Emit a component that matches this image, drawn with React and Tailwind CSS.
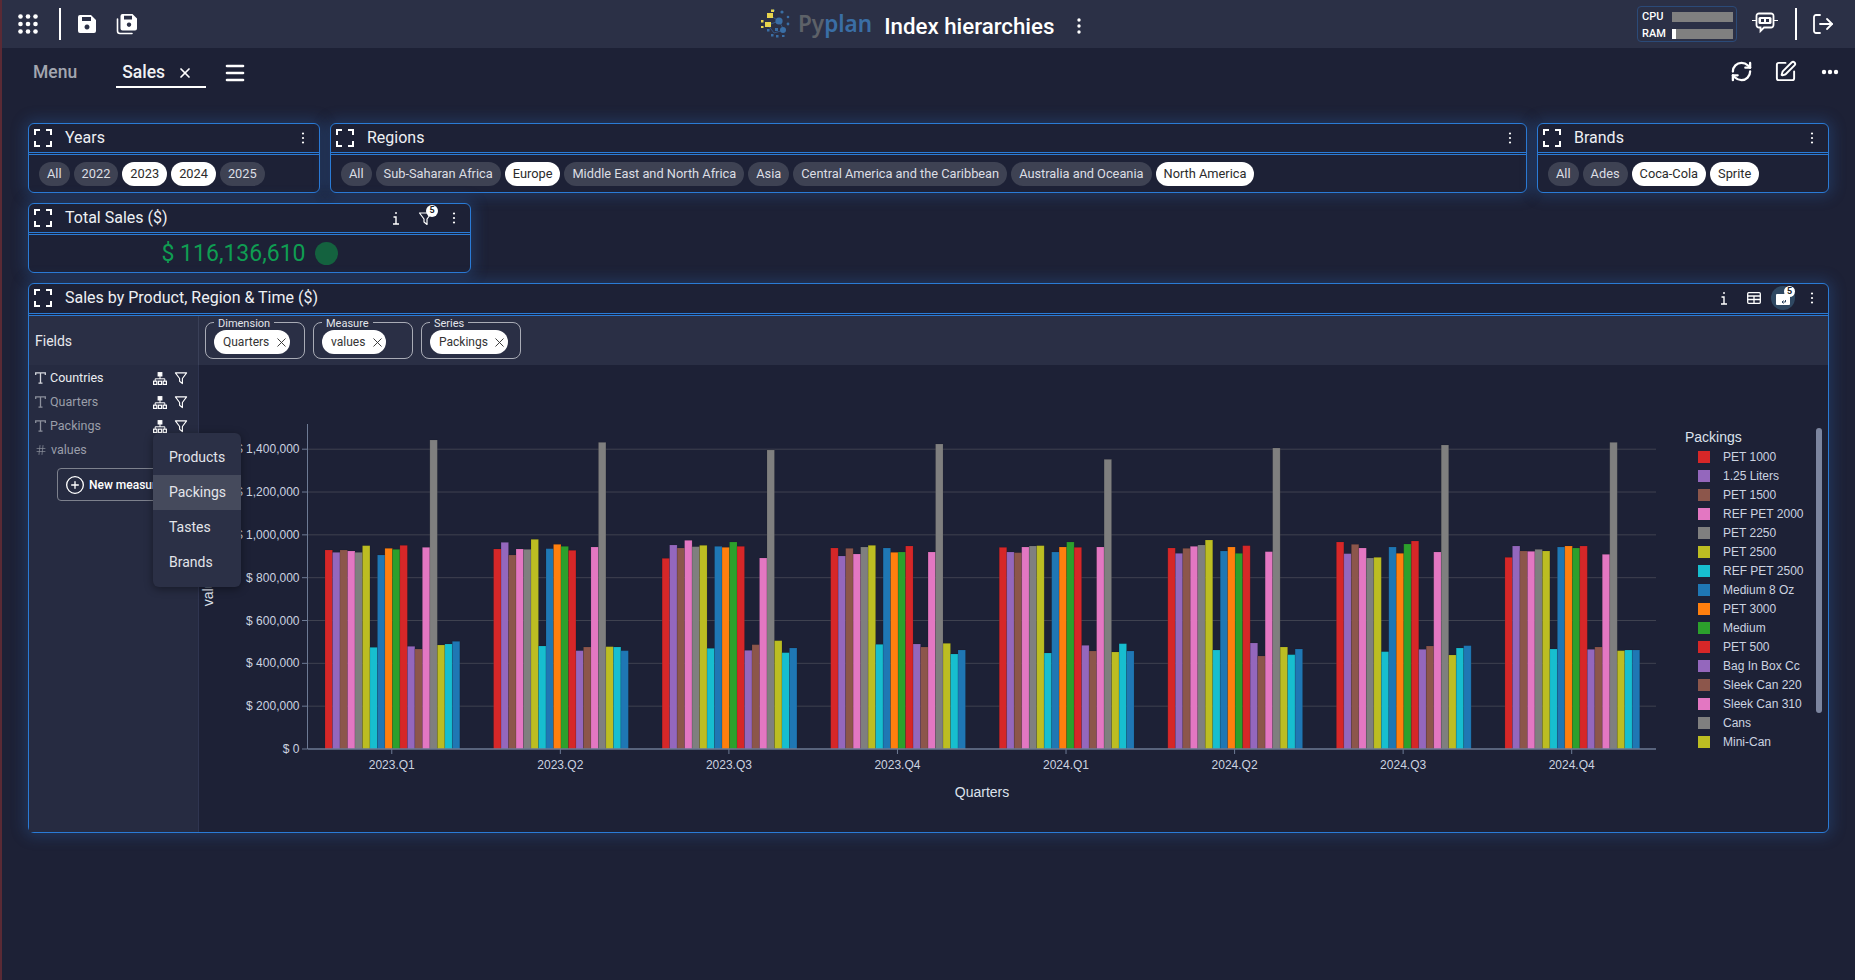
import { X, Menu, Hash, CirclePlus, RefreshCw, SquarePen, LogOut } from "lucide-react";

const palette = ["#d62728", "#9467bd", "#8c564b", "#e377c2", "#7f7f7f", "#bcbd22", "#17becf", "#1f77b4", "#ff7f0e", "#2ca02c"];
const swatches = ["bg-[#d62728]", "bg-[#9467bd]", "bg-[#8c564b]", "bg-[#e377c2]", "bg-[#7f7f7f]", "bg-[#bcbd22]", "bg-[#17becf]", "bg-[#1f77b4]", "bg-[#ff7f0e]", "bg-[#2ca02c]"];

// bar tops, measured off the reference (3x page y, minus 420)
const tops = [
  [390, 397, 390, 393, 397, 377, 682, 405, 385, 388, 376, 679, 687, 382, 60, 675, 672, 664],
  [387, 367, 405, 387, 388, 358, 678, 386, 373, 379, 391, 692, 681, 381, 67, 680, 681, 692],
  [415, 375, 384, 361, 380, 376, 685, 379, 382, 366, 379, 691, 674, 414, 90, 662, 698, 684],
  [384, 408, 385, 402, 381, 376, 673, 384, 397, 396, 378, 672, 681, 396, 72, 670, 702, 690],
  [382, 396, 398, 381, 378, 377, 699, 396, 381, 366, 382, 676, 693, 381, 118, 696, 671, 693],
  [384, 400, 385, 379, 375, 360, 690, 393, 381, 400, 377, 669, 708, 395, 84, 681, 704, 687],
  [366, 401, 373, 384, 414, 412, 695, 381, 400, 372, 363, 688, 678, 396, 75, 705, 684, 677],
  [412, 378, 393, 394, 388, 393, 687, 381, 378, 384, 378, 688, 681, 403, 67, 692, 690, 690],
];
const quarters = ["2023.Q1", "2023.Q2", "2023.Q3", "2023.Q4", "2024.Q1", "2024.Q2", "2024.Q3", "2024.Q4"];
const yTicks = ["$ 0", "$ 200,000", "$ 400,000", "$ 600,000", "$ 800,000", "$ 1,000,000", "$ 1,200,000", "$ 1,400,000"];
const legend = ["PET 1000", "1.25 Liters", "PET 1500", "REF PET 2000", "PET 2250", "PET 2500", "REF PET 2500", "Medium 8 Oz", "PET 3000", "Medium", "PET 500", "Bag In Box Cc", "Sleek Can 220", "Sleek Can 310", "Cans", "Mini-Can"];

function Corners() {
  return (
    <svg width="18" height="18" viewBox="0 0 18 18" fill="none" stroke="#fff" strokeWidth="2" className="shrink-0">
      <path d="M1 6V1h5M12 1h5v5M17 12v5h-5M6 17H1v-5" />
    </svg>
  );
}

function Kebab() {
  return (
    <svg width="4" height="14" viewBox="0 0 4 14" fill="#fff" className="shrink-0">
      <circle cx="2" cy="2.5" r="1.1" />
      <circle cx="2" cy="7" r="1.1" />
      <circle cx="2" cy="11.5" r="1.1" />
    </svg>
  );
}

function InfoI() {
  return (
    <svg width="8" height="14" viewBox="0 0 8 14" fill="none" stroke="#fff" strokeWidth="1.4">
      <path d="M4 1v2M1.5 6H4v7M1 13h6" />
    </svg>
  );
}

function Funnel({ size = 15 }) {
  return (
    <svg width={size} height={size} viewBox="0 0 15 15" fill="none" stroke="#fff" strokeWidth="1.2" strokeLinejoin="round">
      <path d="M1.5 2h12L9 8v5.500L6 11V8z" />
    </svg>
  );
}

function Tree() {
  return (
    <svg width="14" height="13" viewBox="0 0 14 13" fill="none" stroke="#fff" strokeWidth="1.200">
      <rect x="5.200" y="0.700" width="3.600" height="3.200" fill="#fff" />
      <path d="M7 4v3M2.200 9V6.800h9.600V9" strokeWidth="1" />
      <rect x="0.600" y="9.200" width="3.200" height="3.200" />
      <rect x="5.400" y="9.200" width="3.200" height="3.200" />
      <rect x="10.200" y="9.200" width="3.200" height="3.200" />
    </svg>
  );
}

function SerifT({ dim }) {
  return (
    <svg width="11" height="12" viewBox="0 0 11 12" fill="none" stroke={dim ? "#8c909c" : "#d5d7dd"} strokeWidth="1.3">
      <path d="M.7 3V.9h9.600V3M5.500 1v10M3.500 11.200h4" />
    </svg>
  );
}

function Logo() {
  return (
    <svg width="32" height="30" viewBox="0 0 32 30">
      <g stroke="#3a669c" strokeWidth="0.7">
        <path d="M11 7L19 12L24 21L14 24L8 16L19 12" fill="none" />
      </g>
      <g fill="#3a6ea5">
        <circle cx="19" cy="12" r="3.600" />
        <circle cx="23" cy="21" r="3" />
        <circle cx="22" cy="3" r="1.600" />
        <circle cx="28" cy="8" r="1.300" />
        <circle cx="28" cy="15" r="1.400" />
        <rect x="15" y="19" width="3" height="3" />
        <rect x="11" y="25" width="2.500" height="2.500" />
        <rect x="16" y="26" width="2.500" height="2.500" />
        <rect x="7" y="20" width="2.500" height="2.500" />
        <rect x="22" y="26" width="2.500" height="2" />
        <circle cx="14" cy="1.500" r="1" />
      </g>
      <g fill="#e8d44d">
        <rect x="7" y="4" width="6" height="5" />
        <rect x="5" y="13" width="6" height="5" />
        <rect x="11" y="0.500" width="3" height="2.500" />
        <rect x="1" y="11" width="2.500" height="2.500" />
        <rect x="1" y="17" width="2.500" height="2" />
      </g>
    </svg>
  );
}

function SaveIcon({ stack }) {
  return (
    <svg width="22" height="22" viewBox="0 0 22 22">
      {stack && <path d="M1.500 6v12a2.500 2.500 0 0 0 2.500 2.500h12" fill="none" stroke="#fff" strokeWidth="1.600" strokeLinecap="round" />}
      <path
        fillRule="evenodd"
        fill="#fff"
        d={
          stack
            ? "M6.500 1h10l4.500 4.500v10a2 2 0 0 1-2 2H6.500a2 2 0 0 1-2-2V3a2 2 0 0 1 2-2zM8 2.800v3.700h8V2.800zM13 9.500a2.200 2.200 0 1 0 .01 0z"
            : "M4 2h11l5 5v11a2 2 0 0 1-2 2H4a2 2 0 0 1-2-2V4a2 2 0 0 1 2-2zM6 4v4h9V4zM11 11.500a2.500 2.500 0 1 0 .01 0z"
        }
      />
    </svg>
  );
}

function BotIcon() {
  return (
    <svg width="26" height="24" viewBox="0 0 26 24" fill="none">
      <path d="M0 8.500h4M22 8.500h4" stroke="#fff" strokeWidth="1.200" />
      <path d="M7 1.500h12a2.500 2.500 0 0 1 2.500 2.500v9a2.500 2.500 0 0 1-2.500 2.500h-7l-3.500 3.500v-3.500H7A2.500 2.500 0 0 1 4.500 13V4A2.500 2.500 0 0 1 7 1.500z" stroke="#fff" strokeWidth="1.800" />
      <rect x="6.500" y="5" width="13" height="7" rx="1.500" fill="#fff" />
      <rect x="9" y="7" width="3" height="3" fill="#2b3046" />
      <rect x="14" y="7" width="3" height="3" fill="#2b3046" />
    </svg>
  );
}

function Pill({ label, on }) {
  return (
    <span className={`flex h-[24px] items-center rounded-full px-[8px] text-[12.8px] ${on ? "bg-white text-[#2b2b2b]" : "bg-[#3e4253] text-[#dcdee4]"}`}>
      {label}
    </span>
  );
}

function Card({ title, actions, className, headerClass = "h-[29px]", bodyClass, children }) {
  return (
    <div className={`flex flex-col rounded-[6px] border border-[#2a7bd6] bg-[#1d2136] shadow-[0_0_14px_4px_rgba(45,105,180,0.28)] ${className}`}>
      <div className={`flex shrink-0 items-center gap-[13px] border-b border-[#2a7bd6] pl-[5px] pr-[14px] ${headerClass}`}>
        <Corners />
        <span className="flex-1 text-[16px] leading-none text-[#eef0f4]">{title}</span>
        {actions || <Kebab />}
      </div>
      <div className={`mt-px flex-1 border-t border-[#2a7bd6] ${bodyClass}`}>{children}</div>
    </div>
  );
}

function Slicer({ title, className, items }) {
  return (
    <Card title={title} className={className} bodyClass="flex items-center gap-[4px] px-[10px]">
      {items.map(([label, on]) => (
        <Pill key={label} label={label} on={on} />
      ))}
    </Card>
  );
}

function DropBox({ label, chip, chipClass }) {
  return (
    <div className="relative flex h-[37px] w-[100px] items-center rounded-[8px] border border-[#a9acb6] pl-[8px]">
      <span className="absolute -top-[6px] left-[8px] bg-[#2a2f45] px-[4px] text-[11px] leading-[13px] text-[#e3e5ea]">{label}</span>
      <span className={`mt-[3px] flex h-[24px] items-center justify-between rounded-full bg-white pl-[9px] pr-[1px] text-[12px] text-[#333] ${chipClass}`}>
        {chip}
        <X size={15} strokeWidth={1.5} color="#333" />
      </span>
    </div>
  );
}

function FieldRow({ label, dim, active }) {
  return (
    <div className="flex h-[24px] items-center pl-[6px] pr-[10px]">
      <SerifT dim={dim} />
      <span className={`ml-[4px] flex-1 text-[12.5px] ${active ? "text-[#eceef1]" : "text-[#9a9ea9]"}`}>{label}</span>
      <Tree />
      <span className="ml-[7px] flex">
        <Funnel size={14} />
      </span>
    </div>
  );
}

function Chart() {
  const band = 168.56;
  const barW = 7.49;
  return (
    <svg width="1481" height="464" viewBox="199 365 1481 464" className="shrink-0" style={{ fontFamily: "'Liberation Sans', sans-serif" }}>
      {yTicks.map((t, k) => {
        const y = 749 - k * 42.83;
        return (
          <g key={t}>
            {k > 0 && <line x1="308" x2="1656" y1={y} y2={y} stroke="#3f4250" strokeWidth="1" />}
            <line x1="302" x2="307" y1={y} y2={y} stroke="#6d7a94" strokeWidth="1" />
            <text x="299.500" y={y + 4} textAnchor="end" fontSize="12" fill="#ccd3e0">{t}</text>
          </g>
        );
      })}
      <line x1="307.500" x2="307.500" y1="424" y2="749" stroke="#6d7a94" strokeWidth="1" />
      {tops.map((row, g) =>
        row.map((v, i) => {
          const top = 420 + v / 3;
          return (
            <rect
              key={`${g}-${i}`}
              x={325 + g * band + i * barW}
              y={top}
              width={barW}
              height={749 - top}
              fill={palette[i % 10]}
              stroke="#000"
              strokeOpacity="0.12"
              strokeWidth="0.8"
            />
          );
        })
      )}
      <line x1="307.500" x2="1656" y1="749" y2="749" stroke="#6d7a94" strokeWidth="1.500" />
      {quarters.map((q, g) => {
        const x = 307.5 + (g + 0.5) * band;
        return (
          <g key={q}>
            <line x1={x} x2={x} y1="749" y2="754" stroke="#6d7a94" strokeWidth="1" />
            <text x={x} y="769" textAnchor="middle" fontSize="12" fill="#ccd3e0">{q}</text>
          </g>
        );
      })}
      <text x="982" y="797" textAnchor="middle" fontSize="14" fill="#dce2ec">Quarters</text>
      <text transform="translate(213 586) rotate(-90)" textAnchor="middle" fontSize="14" fill="#dce2ec">values</text>
    </svg>
  );
}

export default function App() {
  return (
    <div className="h-[980px] w-full overflow-hidden border-l-2 border-[#5a2a35] bg-[#1d2136] font-['Roboto',sans-serif]">
      {/* TOP BAR */}
      <header className="relative flex h-[48px] items-center bg-[#2b3046] pl-[16px] pr-[20px]">
        <svg width="20" height="20" viewBox="0 0 20 20" fill="#fff">
          {[2.5, 10, 17.5].map((y) => [2.5, 10, 17.5].map((x) => <circle key={`${x}${y}`} cx={x} cy={y} r="2.300" />))}
        </svg>
        <div className="ml-[21px] h-[32px] w-[2px] bg-white" />
        <div className="ml-[15px] flex items-center gap-[18px]">
          <SaveIcon />
          <SaveIcon stack />
        </div>
        <div className="flex-1" />
        <div className="flex h-[36px] w-[100px] flex-col justify-center gap-[7px] rounded-[4px] border border-[#2b4a78] pl-[4px] pr-[3px] pt-[3px] text-[11px] font-medium leading-[10px] text-white">
          <div className="flex items-center justify-between">
            <span>CPU</span>
            <span className="h-[10px] w-[61px] bg-[#808080]" />
          </div>
          <div className="flex items-center justify-between">
            <span>RAM</span>
            <span className="flex h-[10px] w-[61px] bg-[#808080]">
              <span className="h-full w-[4px] bg-white" />
            </span>
          </div>
        </div>
        <div className="ml-[15px]">
          <BotIcon />
        </div>
        <div className="ml-[17px] h-[32px] w-[2px] bg-white" />
        <LogOut size={24} strokeWidth={1.8} color="#fff" className="ml-[14px]" />
        {/* centred title */}
        <div className="absolute left-[758px] top-0 flex h-[48px] items-center">
          <Logo />
          <span className="ml-[6px] font-['Noto_Sans',sans-serif] text-[22.5px] font-semibold leading-none">
            <span className="text-[#5d6168]">Py</span>
            <span className="text-[#3a6ea5]">plan</span>
          </span>
          <span className="ml-[12px] pt-[5px] text-[22.3px] font-medium text-white">Index hierarchies</span>
          <span className="ml-[22px] flex pt-[3px]">
            <svg width="6" height="16" viewBox="0 0 6 16" fill="#fff">
              <circle cx="3" cy="2" r="1.700" />
              <circle cx="3" cy="8" r="1.700" />
              <circle cx="3" cy="14" r="1.700" />
            </svg>
          </span>
        </div>
      </header>

      {/* TABS */}
      <div className="flex h-[48px] items-start pl-[31px] pr-[16px] pt-[12px]">
        <span className="text-[17.5px] font-medium leading-[24px] text-[#a3a6b0]">Menu</span>
        <div className="ml-[39px] flex h-[28px] w-[90px] items-start gap-[12px] border-b-2 border-white pl-[6px]">
          <span className="text-[17.5px] font-medium leading-[24px] text-[#f0f1f4]">Sales</span>
          <X size={16} strokeWidth={2.6} color="#fff" className="mt-[5px]" />
        </div>
        <Menu size={24} strokeWidth={2.6} color="#fff" className="ml-[17px] mt-[1px]" />
        <div className="flex-1" />
        <div className="flex items-center">
          <RefreshCw size={23} strokeWidth={2.4} color="#fff" />
          <SquarePen size={23} strokeWidth={2} color="#fff" className="ml-[21px]" />
          <svg width="18" height="6" viewBox="0 0 18 6" fill="#fff" className="ml-[24px]">
            <circle cx="3" cy="3" r="2.200" />
            <circle cx="9" cy="3" r="2.200" />
            <circle cx="15" cy="3" r="2.200" />
          </svg>
        </div>
      </div>

      {/* DASHBOARD */}
      <main className="flex flex-col gap-[10px] pl-[26px] pr-[26px] pt-[27px]">
        <div className="flex h-[70px] gap-[10px]">
          <Slicer title="Years" className="w-[292px]" items={[["All"], ["2022"], ["2023", true], ["2024", true], ["2025"]]} />
          <Slicer
            title="Regions"
            className="flex-1"
            items={[["All"], ["Sub-Saharan Africa"], ["Europe", true], ["Middle East and North Africa"], ["Asia"], ["Central America and the Caribbean"], ["Australia and Oceania"], ["North America", true]]}
          />
          <Slicer title="Brands" className="w-[292px]" items={[["All"], ["Ades"], ["Coca-Cola", true], ["Sprite", true]]} />
        </div>

        <Card
          title="Total Sales ($)"
          className="h-[70px] w-[443px]"
          bodyClass="flex items-center justify-center gap-[9px]"
          actions={
            <div className="flex items-center">
              <InfoI />
              <span className="relative ml-[18px] flex">
                <Funnel />
                <span className="absolute -top-[6px] -right-[5px] flex h-[12px] w-[12px] items-center justify-center rounded-full bg-white text-[9px] font-bold text-[#222]">5</span>
              </span>
              <span className="ml-[19px] flex">
                <Kebab />
              </span>
            </div>
          }
        >
          <span className="text-[23px] leading-none text-[#0f9d52]">$ 116,136,610</span>
          <span className="h-[23px] w-[23px] rounded-full bg-[#14623f]" />
        </Card>

        <Card
          title="Sales by Product, Region & Time ($)"
          className="h-[550px]"
          headerClass="h-[30px] pb-[1px]"
          bodyClass="flex min-h-0 flex-col"
          actions={
            <div className="flex items-center">
              <span className="mr-[-3px] flex">
                <InfoI />
              </span>
              <svg width="14" height="12" viewBox="0 0 14 12" fill="none" stroke="#fff" strokeWidth="1.300" className="ml-[22px]">
                <rect x="0.700" y="0.700" width="12.600" height="10.600" rx="1" />
                <path d="M.7 4h12.600M.7 7.500h12.600M7 4v7.300" />
              </svg>
              <span className="relative ml-[10px] flex h-[24px] w-[24px] items-center justify-center rounded-full bg-[#2f4862]">
                <svg width="14" height="13" viewBox="0 0 14 13" fill="#fff">
                  <path d="M1 2h12a1 1 0 0 1 1 1v9a1 1 0 0 1-1 1H1a1 1 0 0 1-1-1V3a1 1 0 0 1 1-1z" />
                  <path d="M6 10h3.500V8M7.500 8.500L6 10l1.500 1.500" fill="none" stroke="#2f4862" strokeWidth="1" />
                </svg>
                <span className="absolute left-[13px] top-0 flex h-[11px] w-[11px] items-center justify-center rounded-full bg-white text-[9px] font-bold text-[#222]">5</span>
              </span>
              <span className="ml-[15px] flex">
                <Kebab />
              </span>
            </div>
          }
        >
          <div className="flex h-[49px] shrink-0 bg-[#2a2f45]">
            <div className="flex w-[170px] shrink-0 items-center border-r border-[#3a4058] pl-[6px] pt-[2px] text-[14px] text-[#e8e9ed]">Fields</div>
            <div className="flex items-center gap-[8px] pl-[6px]">
              <DropBox label="Dimension" chip="Quarters" chipClass="w-[76px]" />
              <DropBox label="Measure" chip="values" chipClass="w-[64px]" />
              <DropBox label="Series" chip="Packings" chipClass="w-[78px]" />
            </div>
          </div>
          <div className="relative flex min-h-0 flex-1">
            <aside className="w-[170px] shrink-0 border-r border-[#2f3550] bg-[#262b41] pt-[1px]">
              <FieldRow label="Countries" active />
              <FieldRow label="Quarters" dim />
              <FieldRow label="Packings" dim />
              <div className="flex h-[24px] items-center pl-[6px]">
                <Hash size={12} strokeWidth={1.4} color="#8c909c" />
                <span className="ml-[4px] text-[12.5px] text-[#9a9ea9]">values</span>
              </div>
              <button className="ml-[28px] mt-[6px] flex h-[33px] w-[130px] items-center gap-[4px] overflow-hidden rounded-[4px] border border-[#7d818d] pl-[7px] text-[12px] font-medium whitespace-nowrap text-white">
                <CirclePlus size={20} strokeWidth={1.6} color="#fff" />
                New measure
              </button>
            </aside>
            <Chart />
            <div className="relative flex-1 pl-[5px] pt-[63px] font-['Liberation_Sans',sans-serif]">
              <div className="text-[14px] leading-[18px] text-[#dce2ec]">Packings</div>
              <div className="mt-[1px]">
                {legend.map((name, i) => (
                  <div key={name} className="flex h-[19px] items-center pl-[13px]">
                    <span className={`h-[12px] w-[12px] ${swatches[i % 10]}`} />
                    <span className="ml-[13px] text-[12px] text-[#ccd3e0]">{name}</span>
                  </div>
                ))}
              </div>
              <div className="absolute right-[6px] top-[63px] h-[285px] w-[6px] rounded-full bg-[#7c859f]" />
            </div>
            {/* dropdown over the fields list */}
            <div className="absolute left-[124px] top-[68px] w-[88px] rounded-[6px] bg-[#2b3046] py-[7px] text-[14px] text-[#e3e5ea] shadow-[0_2px_8px_rgba(0,0,0,0.4)]">
              <div className="flex h-[35px] items-center pl-[16px]">Products</div>
              <div className="flex h-[35px] items-center bg-[#454a5c] pl-[16px]">Packings</div>
              <div className="flex h-[35px] items-center pl-[16px]">Tastes</div>
              <div className="flex h-[35px] items-center pl-[16px]">Brands</div>
            </div>
          </div>
        </Card>
      </main>
    </div>
  );
}
